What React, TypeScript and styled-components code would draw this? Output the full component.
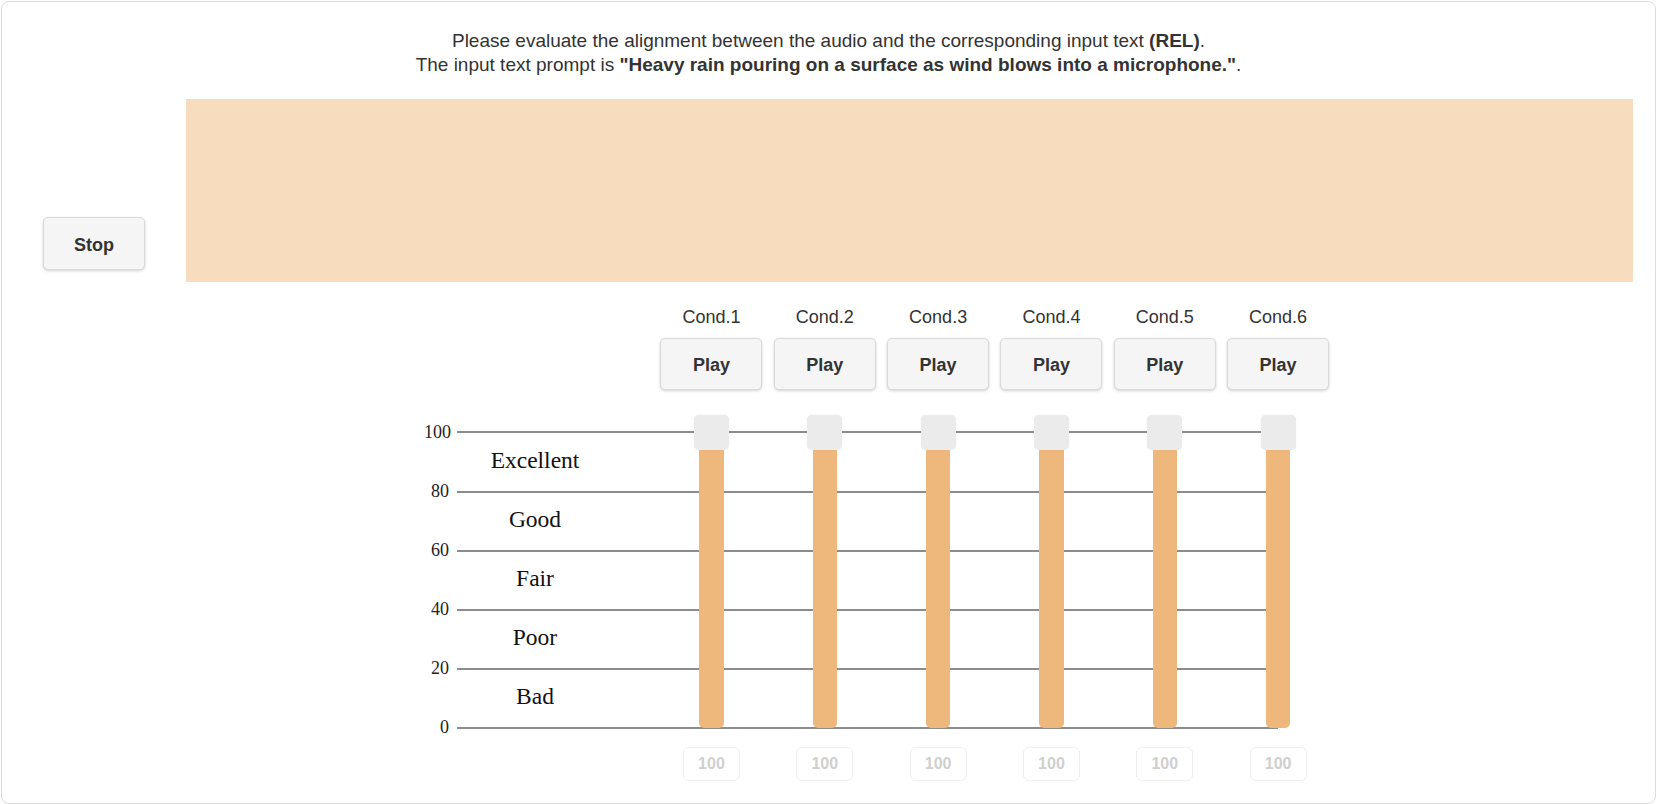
import styled, { createGlobalStyle } from "styled-components"

const GlobalStyle = createGlobalStyle`
  html, body {
    margin: 0;
    padding: 0;
    background: #fff;
  }
  body {
    font-family: "Liberation Sans", Arial, Helvetica, sans-serif;
    color: #333;
  }
  * {
    box-sizing: border-box;
  }
`

const Page = styled.div`
  padding: 1px;
`

const Card = styled.div`
  width: 1655px;
  border: 1px solid #dcdcdc;
  border-radius: 8px;
  padding: 27px 0 22px;
  background: #fff;
`

const Instructions = styled.div`
  text-align: center;
  font-size: 19px;
  line-height: 24px;
  color: #333;
`

const WaveRow = styled.div`
  display: flex;
  margin-top: 22px;
  padding-right: 22px;
`

const StopCell = styled.div`
  width: 184px;
  display: flex;
  justify-content: center;
  align-items: flex-end;
  padding-bottom: 12px;
`

const Button = styled.button<{ $tall?: boolean }>`
  width: 102px;
  height: ${(p) => (p.$tall ? 53 : 52)}px;
  padding: 3px 0 0;
  background: #f5f5f5;
  border: 1px solid #dadada;
  border-radius: 5px;
  box-shadow: 0 1px 3px rgba(0, 0, 0, 0.18);
  font-family: "Liberation Sans", Arial, sans-serif;
  font-size: 18px;
  font-weight: bold;
  color: #333;
  cursor: pointer;
`

const Waveform = styled.div`
  flex: 1;
  height: 183px;
  background: #f7ddbd;
`

const Board = styled.div`
  display: grid;
  grid-template-columns: 33px 197.8px repeat(6, 113.33px);
  margin: 23.7px 0 0 422px;
`

const CondLabel = styled.div<{ $col: number }>`
  grid-row: 1;
  grid-column: ${(p) => p.$col};
  text-align: center;
  font-size: 18px;
  line-height: 22px;
  color: #333;
`

const PlayCell = styled.div<{ $col: number }>`
  grid-row: 2;
  grid-column: ${(p) => p.$col};
  justify-self: center;
  margin-top: 10.3px;
`

const Ticks = styled.div`
  grid-row: 3;
  grid-column: 1;
  margin: 32.5px 0 -10px;
  height: 315px;
  display: flex;
  flex-direction: column;
  justify-content: space-between;
  padding-right: 8px;
  font-family: "Liberation Serif", "Times New Roman", serif;
  font-size: 18px;
  color: #222;
`

const Tick = styled.div`
  height: 20px;
  line-height: 20px;
  text-align: right;
`

const Scale = styled.div`
  grid-row: 3;
  grid-column: 2 / 9;
  align-self: start;
  margin: 41.5px 56.7px 0 0;
  display: flex;
  flex-direction: column;
`

const Band = styled.div`
  height: 59.1px;
  border-top: 2px solid #8c8c8c;
  display: flex;
  align-items: center;

  &:last-child {
    height: 61.1px;
    border-bottom: 2px solid #8c8c8c;
  }
`

const BandLabel = styled.div`
  width: 156px;
  padding-bottom: 4px;
  text-align: center;
  font-family: "Liberation Serif", "Times New Roman", serif;
  font-size: 23.5px;
  color: #111;
`

const SliderCell = styled.div<{ $col: number }>`
  grid-row: 3;
  grid-column: ${(p) => p.$col};
  justify-self: center;
  position: relative;
  z-index: 1;
  margin-top: 25px;
  width: 35px;
  height: 313px;
  padding-top: 17px;
  display: flex;
  justify-content: center;
`

const Track = styled.div`
  width: 24.5px;
  height: 100%;
  display: flex;
  flex-direction: column;
  justify-content: flex-end;
`

const Fill = styled.div`
  background: #eeb87d;
  border-radius: 0 0 5px 5px;
`

const Handle = styled.div`
  position: absolute;
  left: 0;
  width: 35px;
  height: 35px;
  background: #ebebeb;
  border-radius: 5px;
  box-shadow: 0 0 1px rgba(0, 0, 0, 0.12);
`

const ValueBox = styled.div<{ $col: number }>`
  grid-row: 4;
  grid-column: ${(p) => p.$col};
  justify-self: center;
  margin-top: 18px;
  width: 57px;
  height: 34px;
  border: 1px solid #efefef;
  border-radius: 6px;
  display: flex;
  align-items: center;
  justify-content: center;
  font-size: 16px;
  font-weight: bold;
  color: #cfcfcf;
`

const conditions = [1, 2, 3, 4, 5, 6].map((n) => ({
  name: `Cond.${n}`,
  value: 100,
}))

const ticks = [100, 80, 60, 40, 20, 0]
const bands = ["Excellent", "Good", "Fair", "Poor", "Bad"]

// handle centre travels from the 100 line down to the 0 line
const RANGE = 295.5

export default function App() {
  return (
    <>
      <GlobalStyle />
      <Page>
        <Card>
          <Instructions>
            Please evaluate the alignment between the audio and the
            corresponding input text <b>(REL)</b>.
            <br />
            The input text prompt is{" "}
            <b>"Heavy rain pouring on a surface as wind blows into a microphone."</b>.
          </Instructions>

          <WaveRow>
            <StopCell>
              <Button $tall>Stop</Button>
            </StopCell>
            <Waveform />
          </WaveRow>

          <Board>
            {conditions.map((c, i) => (
              <CondLabel key={c.name} $col={i + 3}>
                {c.name}
              </CondLabel>
            ))}
            {conditions.map((c, i) => (
              <PlayCell key={c.name} $col={i + 3}>
                <Button>Play</Button>
              </PlayCell>
            ))}

            <Ticks>
              {ticks.map((t) => (
                <Tick key={t}>{t}</Tick>
              ))}
            </Ticks>
            <Scale>
              {bands.map((b) => (
                <Band key={b}>
                  <BandLabel>{b}</BandLabel>
                </Band>
              ))}
            </Scale>

            {conditions.map((c, i) => (
              <SliderCell key={c.name} $col={i + 3}>
                <Track>
                  <Fill style={{ height: `${c.value}%` }} />
                </Track>
                <Handle style={{ top: ((100 - c.value) / 100) * RANGE }} />
              </SliderCell>
            ))}

            {conditions.map((c, i) => (
              <ValueBox key={c.name} $col={i + 3}>
                {c.value}
              </ValueBox>
            ))}
          </Board>
        </Card>
      </Page>
    </>
  )
}
